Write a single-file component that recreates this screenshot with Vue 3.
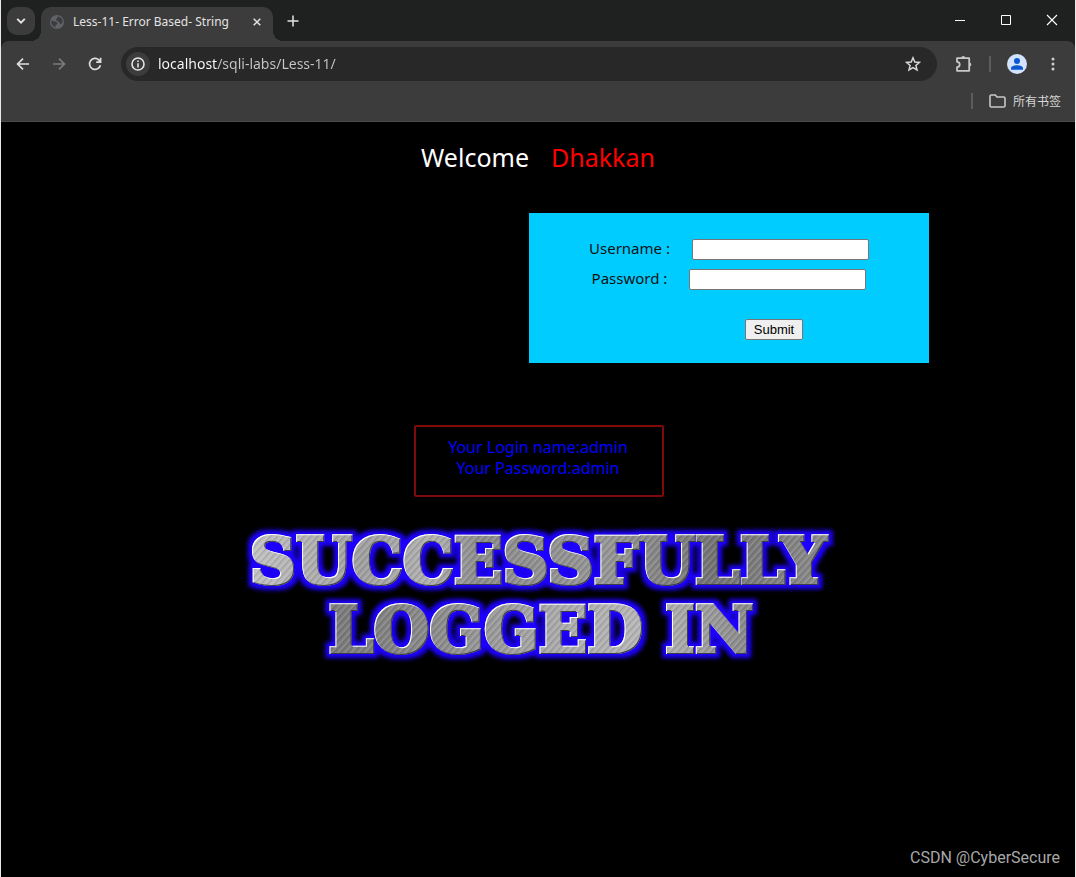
<script setup>
import { ref } from 'vue'

const address = ref('localhost/sqli-labs/Less-11/')
const username = ref('')
const password = ref('')
</script>

<template>
  <div class="window">
    <header class="chrome">
      <div class="tabstrip">
        <button class="tab-search" type="button" aria-label="Search tabs">
          <svg width="10" height="8" viewBox="0 0 10 8"><path d="M1.2 1.8 5 5.6l3.800-3.800" fill="none" stroke="#e3e3e3" stroke-width="1.900" /></svg>
        </button>
        <div class="tab">
          <svg class="globe" width="14" height="14" viewBox="0 0 14 14">
            <circle cx="7" cy="7" r="7" fill="#5f6368" />
            <path d="M1.500 5.500 5 6.500 7.500 7.500 7 9.500 5.500 10 5.500 12.300C3 11.700 1.200 9.500 1.300 7ZM7.500 1.400 9 1.700C11.400 2.500 12.700 4.700 12.700 7L11 9.500 9.500 8 8.500 6.500 6.500 5.500 5.800 4 7.500 3Z" fill="#3c3c3c" />
          </svg>
          <span class="tab-title">Less-11- Error Based- String</span>
          <button class="icon" type="button" aria-label="Close tab">
            <svg width="8" height="8" viewBox="0 0 8 8"><path d="m.7.700 6.600 6.600M7.300.7.700 7.300" stroke="#e3e3e3" stroke-width="1.500" /></svg>
          </button>
        </div>
        <button class="icon new-tab" type="button" aria-label="New tab">
          <svg width="12" height="12" viewBox="0 0 12 12"><path d="M6 .5v11M.5 6h11" stroke="#e3e3e3" stroke-width="1.500" /></svg>
        </button>
        <div class="window-controls">
          <button class="icon" type="button" aria-label="Minimize">
            <svg width="12" height="12" viewBox="0 0 12 12"><path d="M1 6.500h10" stroke="#fff" /></svg>
          </button>
          <button class="icon" type="button" aria-label="Maximize">
            <svg width="12" height="12" viewBox="0 0 12 12"><path d="M1.500 1.500h9v9h-9z" fill="none" stroke="#fff" /></svg>
          </button>
          <button class="icon" type="button" aria-label="Close">
            <svg width="12" height="12" viewBox="0 0 12 12"><path d="m1 1 10 10M11 1 1 11" stroke="#fff" stroke-width="1.100" /></svg>
          </button>
        </div>
      </div>

      <div class="toolbar">
        <button class="icon nav" type="button" aria-label="Back">
          <svg width="14" height="14" viewBox="0 0 14 14"><path d="M13 7H2M7 1.600 1.600 7 7 12.400" fill="none" stroke="#dedede" stroke-width="1.700" /></svg>
        </button>
        <button class="icon nav" type="button" aria-label="Forward">
          <svg width="14" height="14" viewBox="0 0 14 14"><path d="M1 7h11M7 1.600 12.400 7 7 12.400" fill="none" stroke="#7b7b7b" stroke-width="1.700" /></svg>
        </button>
        <button class="icon nav" type="button" aria-label="Reload">
          <svg width="14" height="14" viewBox="0 0 14 14"><path d="M12.400 8.200A5.500 5.500 0 1 1 11 3.100L12.300 4.500M12.600.8v4.400H8.200" fill="none" stroke="#dedede" stroke-width="1.700" /></svg>
        </button>
        <div class="omnibox">
          <button class="site-info" type="button" aria-label="View site information">
            <svg width="14" height="14" viewBox="0 0 14 14"><circle cx="7" cy="7" r="6" fill="none" stroke="#e3e3e3" stroke-width="1.600" /><path d="M7 6.200v4.200M7 3.600v1.500" stroke="#e3e3e3" stroke-width="1.600" /></svg>
          </button>
          <input v-model="address" class="address" type="text" aria-label="Address" />
          <button class="icon star" type="button" aria-label="Bookmark this tab">
            <svg width="16" height="16" viewBox="0 0 16 16"><path d="m8 1.800 1.800 4.200 4.600.4-3.500 3 1.100 4.500L8 11.500l-4 2.400 1.100-4.500-3.500-3 4.600-.4Z" fill="none" stroke="#d6d6d6" stroke-width="1.500" /></svg>
          </button>
        </div>
        <button class="icon extensions" type="button" aria-label="Extensions">
          <svg width="18" height="18" viewBox="0 0 18 18"><path d="M2 3.200H14.200V15.800H2V12.200a2.700 2.700 0 0 0 0-5.400Z" fill="none" stroke="#c7c7c7" stroke-width="1.800" stroke-linejoin="round" /><path d="M6.200 3a2 2 0 0 1 4 0ZM14.300 7.500a2 2 0 0 1 0 4Z" fill="#c7c7c7" /></svg>
        </button>
        <span class="divider"></span>
        <button class="icon profile" type="button" aria-label="Profile">
          <svg width="20" height="20" viewBox="0 0 20 20"><circle cx="10" cy="10" r="10" fill="#d3e3fd" /><circle cx="10" cy="7" r="3" fill="#0b57d0" /><path d="M4 15.800v-1.500c0-2 3-3 6-3s6 1 6 3v1.500Z" fill="#0b57d0" /></svg>
        </button>
        <button class="icon menu" type="button" aria-label="Menu">
          <svg width="4" height="14" viewBox="0 0 4 14" fill="#d0d0d0"><circle cx="2" cy="2" r="1.500" /><circle cx="2" cy="7" r="1.500" /><circle cx="2" cy="12" r="1.500" /></svg>
        </button>
      </div>

      <div class="bookmarks">
        <span class="divider"></span>
        <button class="all-bookmarks" type="button">
          <svg width="17" height="14" viewBox="0 0 17 14"><path d="M1 2.200Q1 1 2.200 1H6.300L8 3h6.700Q16 3 16 4.200v7.500Q16 13 14.700 13H2.200Q1 13 1 11.700Z" fill="none" stroke="#c7c7c7" stroke-width="1.600" /></svg>
          所有书签
        </button>
      </div>
    </header>

    <main class="page">
      <h1 class="welcome"><span>Welcome</span><span class="name">Dhakkan</span></h1>

      <div class="form-area">
        <form class="login" @submit.prevent>
          <div class="field">
            <label for="username">Username :</label>
            <input id="username" v-model="username" type="text" />
          </div>
          <div class="field">
            <label for="password">Password :</label>
            <input id="password" v-model="password" type="text" />
          </div>
          <button class="submit" type="submit">Submit</button>
        </form>
      </div>

      <p class="result">Your Login name:admin<br />Your Password:admin</p>

      <svg class="banner" width="620" height="150" viewBox="0 0 620 150">
        <defs>
          <linearGradient id="steel-top" x1="20" y1="0" x2="600" y2="60" gradientUnits="userSpaceOnUse">
            <stop offset="0" stop-color="#c4c4c4" />
            <stop offset="0.200" stop-color="#a0a0a0" />
            <stop offset="0.320" stop-color="#b0b0b0" />
            <stop offset="0.400" stop-color="#8c8c8c" />
            <stop offset="0.620" stop-color="#969696" />
            <stop offset="0.800" stop-color="#747474" />
            <stop offset="1" stop-color="#8c8c8c" />
          </linearGradient>
          <linearGradient id="steel-low" x1="90" y1="0" x2="530" y2="0" gradientUnits="userSpaceOnUse">
            <stop offset="0" stop-color="#787878" />
            <stop offset="0.250" stop-color="#8a8a8a" />
            <stop offset="0.550" stop-color="#ababab" />
            <stop offset="0.750" stop-color="#b8b8b8" />
            <stop offset="1" stop-color="#858585" />
          </linearGradient>
          <pattern id="brush" width="5" height="5" patternUnits="userSpaceOnUse" patternTransform="rotate(42)">
            <path d="M.5 0v5" stroke="#fff" stroke-opacity=".16" />
            <path d="M2.500 0v5" stroke="#000" stroke-opacity=".13" />
          </pattern>
          <pattern id="metal" width="620" height="150" patternUnits="userSpaceOnUse">
            <rect width="620" height="74" fill="url(#steel-top)" />
            <rect y="74" width="620" height="76" fill="url(#steel-low)" />
            <rect width="620" height="150" fill="url(#brush)" />
          </pattern>
          <filter id="emboss" x="0" y="0" width="620" height="150" filterUnits="userSpaceOnUse" color-interpolation-filters="sRGB">
            <feMorphology in="SourceAlpha" operator="dilate" radius="4" result="wide" />
            <feGaussianBlur in="wide" stdDeviation="2" result="soft" />
            <feFlood flood-color="#1d00ff" />
            <feComposite in2="soft" operator="in" result="glow" />
            <feOffset in="SourceAlpha" dx="1" dy="1" result="inner" />
            <feFlood flood-color="#ffffff" />
            <feComposite in2="SourceAlpha" operator="in" />
            <feComposite in2="inner" operator="out" result="light" />
            <feOffset in="SourceAlpha" dx="-1" dy="-1" result="outer" />
            <feFlood flood-color="#3c3c48" />
            <feComposite in2="SourceAlpha" operator="in" />
            <feComposite in2="outer" operator="out" result="dark" />
            <feMerge>
              <feMergeNode in="glow" />
              <feMergeNode in="SourceGraphic" />
              <feMergeNode in="dark" />
              <feMergeNode in="light" />
            </feMerge>
          </filter>
        </defs>
        <g class="banner-text" filter="url(#emboss)" text-anchor="middle" fill="url(#metal)" stroke="url(#metal)">
          <text x="310" y="63">SUCCESSFULLY</text>
          <text x="313" y="132">LOGGED IN</text>
        </g>
      </svg>

      <footer class="credit">CSDN @CyberSecure</footer>
    </main>
  </div>
</template>

<style>
body {
  margin: 0;
  background: #000;
}
</style>

<style scoped>
.window {
  display: flex;
  flex-direction: column;
  box-sizing: border-box;
  min-height: 100vh;
  border: solid #e8e8e8;
  border-width: 0 1px;
  background: #000;
  font-family: "Noto Sans", "Noto Sans CJK SC", sans-serif;
}
button {
  font: inherit;
  cursor: pointer;
}
svg {
  display: block;
}
.icon {
  display: grid;
  place-items: center;
  padding: 0;
  border: 0;
  background: none;
}
.chrome {
  background: #1f2120;
  color: #e3e3e3;
}
.tabstrip {
  display: flex;
  height: 41px;
}
.tab-search {
  display: grid;
  place-items: center;
  width: 28px;
  height: 28px;
  margin: 7px 6px 0;
  padding: 0;
  border: 0;
  border-radius: 10px;
  background: #3c3c3c;
}
.tab {
  position: relative;
  display: flex;
  align-items: center;
  box-sizing: border-box;
  width: 232px;
  height: 34px;
  margin-top: 7px;
  padding: 0 12px 5px 9px;
  border-radius: 10px 10px 0 0;
  background: #3c3c3c;
}
.tab::before,
.tab::after {
  content: "";
  position: absolute;
  bottom: 0;
  width: 10px;
  height: 10px;
}
.tab::before {
  right: 100%;
  background: radial-gradient(circle at 0 0, transparent 10px, #3c3c3c 10px);
}
.tab::after {
  left: 100%;
  background: radial-gradient(circle at 100% 0, transparent 10px, #3c3c3c 10px);
}
.tab-title {
  flex: 1;
  margin-left: 9px;
  font-size: 12px;
  white-space: nowrap;
}
.new-tab {
  width: 28px;
  height: 28px;
  margin: 7px 0 0 6px;
}
.window-controls {
  display: flex;
  height: 40px;
  margin-left: auto;
}
.window-controls .icon {
  width: 46px;
}
.toolbar {
  display: flex;
  align-items: center;
  height: 46px;
  padding: 0 10px 0 4px;
  border-radius: 8px 8px 0 0;
  background: #3c3c3c;
}
.nav {
  width: 36px;
  height: 34px;
}
.omnibox {
  display: flex;
  flex: 1;
  align-items: center;
  height: 34px;
  margin-left: 8px;
  padding: 0 12px 0 5px;
  border-radius: 17px;
  background: #282828;
}
.site-info {
  display: grid;
  place-items: center;
  width: 24px;
  height: 24px;
  padding: 0;
  border: 0;
  border-radius: 12px;
  background: #3c3c3c;
}
.address {
  flex: 1;
  min-width: 0;
  height: 22px;
  margin-left: 8px;
  padding: 0 0 2px;
  border: 0;
  outline: 0;
  background: linear-gradient(to right, #fff 60px, #c7c7c7 60px);
  background-clip: text;
  color: transparent;
  font-family: inherit;
  font-size: 14px;
}
.star {
  width: 24px;
  height: 24px;
}
.extensions {
  width: 36px;
  margin-left: 9px;
}
.divider {
  width: 2px;
  height: 16px;
  background: #5c5c5c;
}
.toolbar .divider {
  margin: 0 8px 0 7px;
}
.profile {
  width: 36px;
}
.menu {
  width: 24px;
  margin-left: 6px;
  margin-right: 0;
}
.bookmarks {
  display: flex;
  align-items: center;
  justify-content: flex-end;
  gap: 16px;
  height: 28px;
  padding: 0 14px 6px 0;
  border-bottom: 1px solid #4a4a4a;
  background: #3c3c3c;
}
.all-bookmarks {
  display: flex;
  align-items: center;
  gap: 7px;
  padding: 0;
  border: 0;
  background: none;
  color: #d6d6d6;
  font-size: 12px;
}
.page {
  display: flex;
  flex: 1;
  flex-direction: column;
  align-items: center;
  padding-top: 18px;
}
.welcome {
  display: flex;
  gap: 22px;
  margin: 0;
  color: #fff;
  font-size: 25px;
  font-weight: 400;
  line-height: 34px;
}
.name {
  color: #f00;
}
.form-area {
  margin-top: 39px;
  padding-left: 382px;
}
.login {
  box-sizing: border-box;
  width: 400px;
  padding: 26px 0 23px;
  background: #0cf;
  color: #111;
  font-size: 15px;
}
.field {
  display: flex;
  justify-content: center;
  gap: 22px;
  height: 21px;
  margin-bottom: 9px;
}
.field label {
  line-height: 18px;
}
.field input {
  box-sizing: border-box;
  width: 177px;
  height: 21px;
  padding: 1px 2px;
  border: 1px solid #767676;
  border-radius: 2px;
  background: #fff;
  font-family: "Liberation Sans", sans-serif;
  font-size: 13px;
}
.submit {
  display: block;
  box-sizing: border-box;
  width: 58px;
  height: 21px;
  margin: 29px 0 0 216px;
  padding: 0;
  border: 1px solid #767676;
  border-radius: 2px;
  background: #efefef;
  color: #000;
  font-family: "Liberation Sans", sans-serif;
  font-size: 13px;
  line-height: 19px;
}
.result {
  box-sizing: border-box;
  width: 250px;
  height: 72px;
  margin: 62px 0 0 2px;
  padding: 10px 2px 10px 0;
  border: 2px solid #7f0a0a;
  border-radius: 2px;
  color: #00f;
  font-size: 16px;
  line-height: 21px;
  text-align: center;
}
.banner {
  margin-top: 23px;
}
.banner-text {
  font-family: "DejaVu Serif", serif;
  font-size: 64px;
  font-weight: 700;
  stroke-width: 4px;
}
.credit {
  align-self: flex-end;
  margin: auto 15px 7px 0;
  color: #a8a8a8;
  font-family: Roboto, sans-serif;
  font-size: 16px;
  line-height: 24px;
}
</style>
